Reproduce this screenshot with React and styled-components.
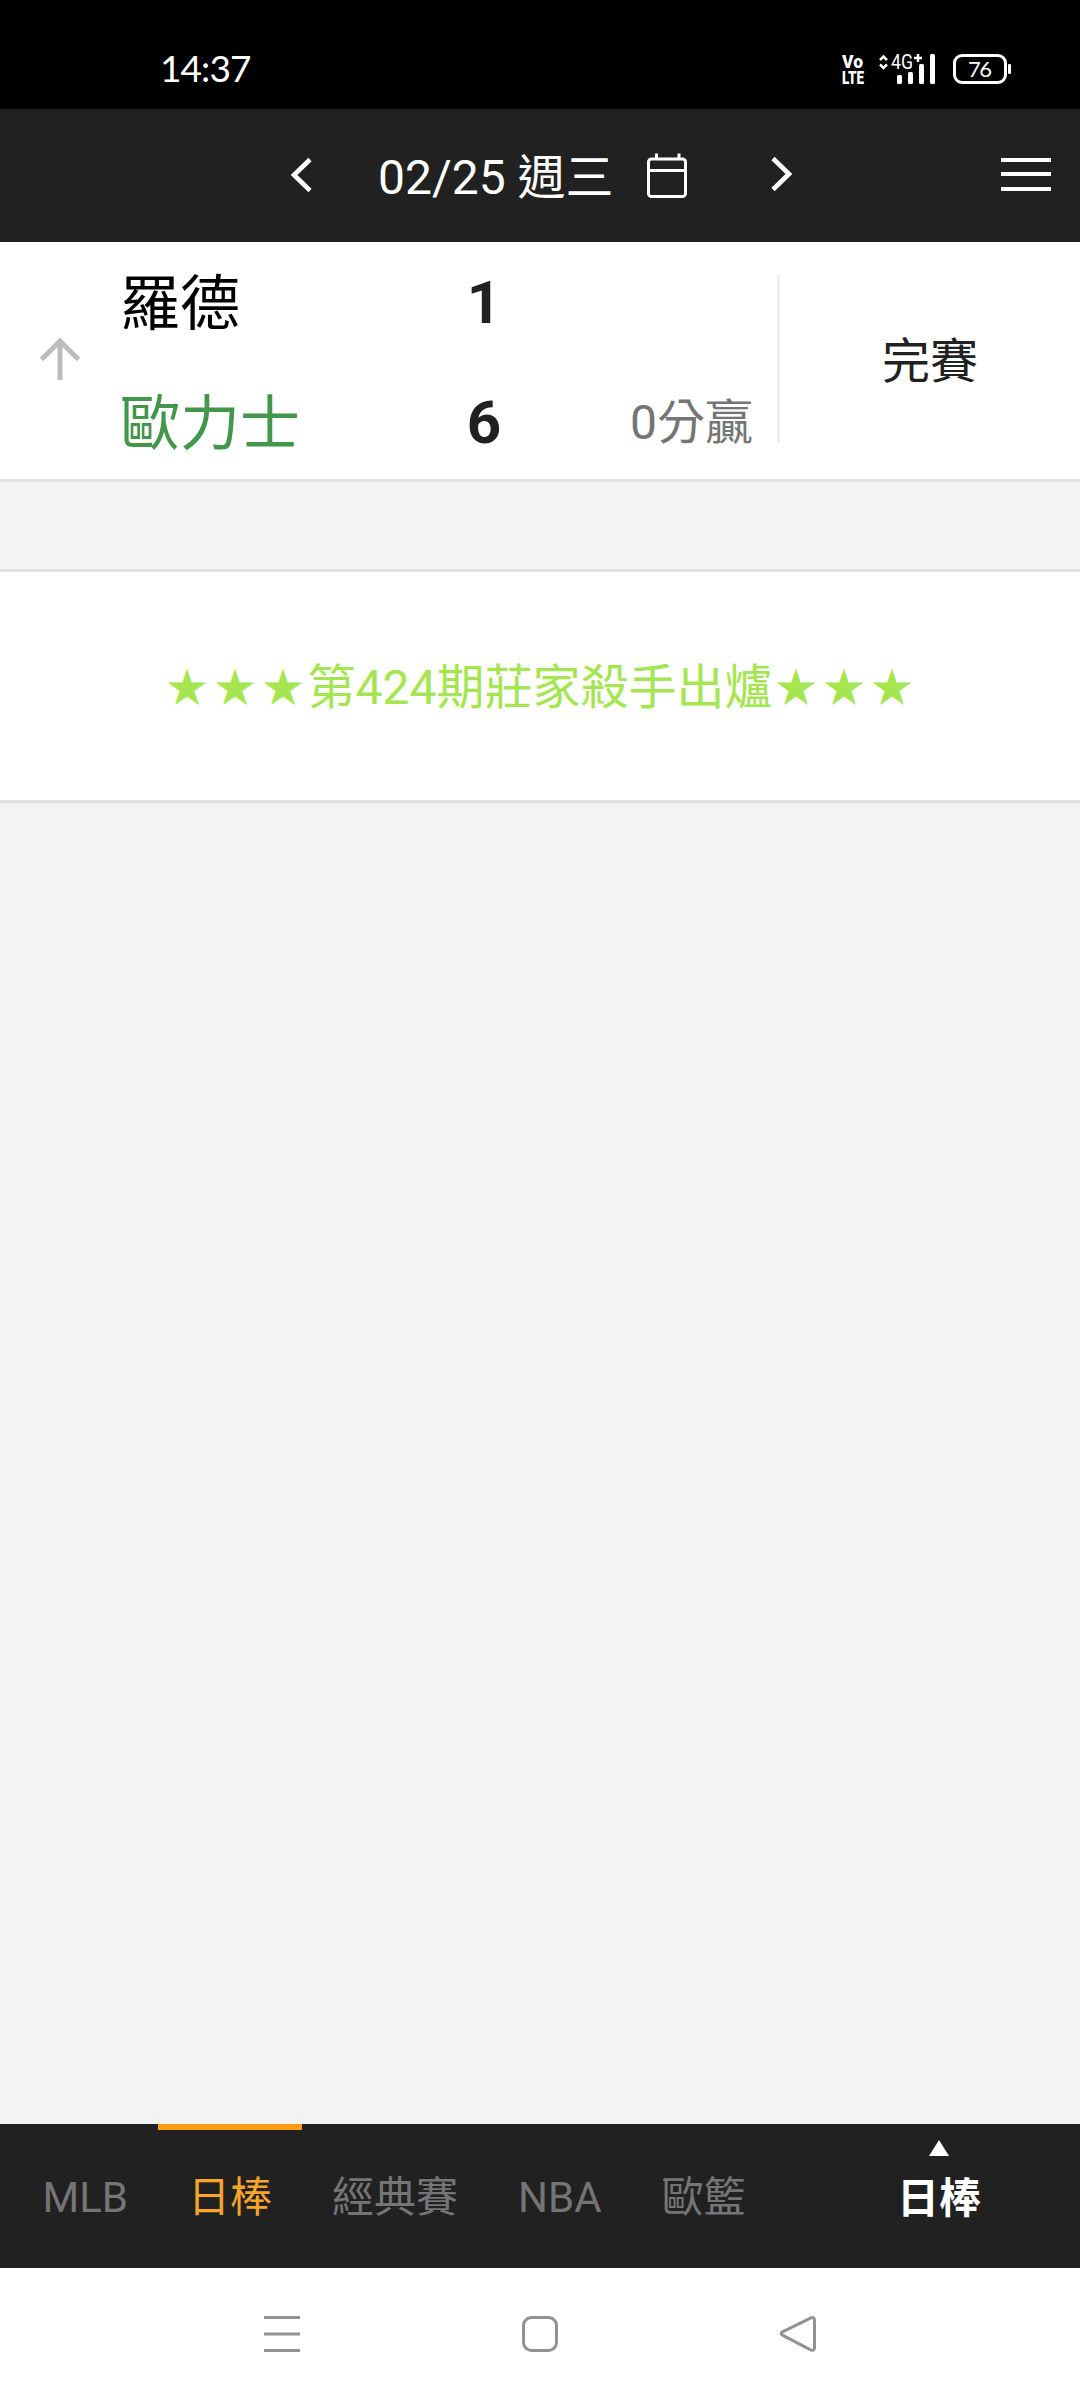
import React from "react";
import styled, { createGlobalStyle } from "styled-components";

const Global = createGlobalStyle`
  body {
    margin: 0;
    background: #f3f3f3;
    font-family: Roboto, "Noto Sans CJK TC", sans-serif;
  }
`;

const Screen = styled.div`
  display: flex;
  flex-direction: column;
  width: 1080px;
  height: 2400px;
  overflow: hidden;
  background: #f3f3f3;
`;

const StatusBar = styled.div`
  display: flex;
  justify-content: space-between;
  height: 109px;
  box-sizing: border-box;
  padding: 45px 69px 0 160px;
  background: #000;
`;

const Clock = styled.time`
  font-family: Lato, sans-serif;
  font-size: 37px;
  line-height: 46px;
  letter-spacing: -0.9px;
  color: #fff;
`;

const StatusIcons = styled.svg`
  width: 170px;
  height: 48px;
`;

const Header = styled.header`
  display: flex;
  align-items: center;
  height: 133px;
  box-sizing: border-box;
  padding: 0 29px 2px 287px;
  background: #212121;
`;

const IconButton = styled.button`
  display: flex;
  padding: 0;
  border: 0;
  background: none;
  margin-left: ${(p) => p.$gap || 0}px;
`;

const DateText = styled.span`
  width: 236px;
  margin-left: 61px;
  padding-top: 7px;
  font-size: 48px;
  line-height: 60px;
  white-space: pre;
  color: #fff;
`;

const GameRow = styled.section`
  display: flex;
  height: 237px;
  background: #fff;
  border-bottom: 3px solid #e0e0e0;
`;

const Trend = styled.div`
  display: flex;
  align-items: center;
  width: 120px;
  box-sizing: border-box;
  padding: 0 0 4px 36px;
`;

const Teams = styled.div`
  display: flex;
  flex-direction: column;
  width: 633px;
`;

const TeamLine = styled.div`
  display: flex;
  align-items: center;
  height: 120px;
  flex-shrink: 0;
  line-height: 80px;
`;

const TeamName = styled.span`
  width: 310px;
  padding-top: 5px;
  font-size: 60px;
  color: ${(p) => (p.$winner ? "#43974a" : "#000")};
`;

const Score = styled.span`
  width: 108px;
  padding-top: 1px;
  text-align: center;
  font-size: 60px;
  font-weight: 700;
  color: #212121;
`;

const Spread = styled.span`
  flex: 1;
  padding-top: 1px;
  text-align: right;
  font-size: 48px;
  color: #757575;
`;

const Divider = styled.div`
  width: 3px;
  height: 168px;
  margin: 33px 0 0 24px;
  background: #eee;
`;

const GameState = styled.div`
  display: flex;
  align-items: center;
  justify-content: center;
  flex: 1;
  padding-top: 3px;
  font-size: 48px;
  line-height: 60px;
  color: #212121;
`;

const Banner = styled.section`
  display: flex;
  align-items: center;
  justify-content: center;
  height: 225px;
  padding-top: 3px;
  margin-top: 87px;
  border: solid #e0e0e0;
  border-width: 3px 0;
  background: #fff;
  font-size: 48px;
  line-height: 60px;
  color: #a5e650;
`;

const Stars = styled.span`
  padding-left: 7px;
  margin: 0 -3px 8px -4px;
  font-family: "Noto Sans CJK TC", sans-serif;
  font-size: 41px;
  letter-spacing: 7px;
`;

const TabBar = styled.nav`
  display: flex;
  height: 144px;
  margin-top: auto;
  padding-left: 12.5px;
  background: #212121;
`;

const Tab = styled.div`
  display: flex;
  align-items: center;
  justify-content: center;
  box-sizing: border-box;
  height: 144px;
  padding: 0 30px 2px;
  border: solid ${(p) => (p.$active ? "#ff9c14" : "transparent")};
  border-width: 6px 0 0;
  font-size: 42px;
  line-height: 60px;
  color: ${(p) => (p.$active ? "#f9a52c" : "#757575")};
`;

const Current = styled.div`
  display: flex;
  flex-direction: column;
  align-items: center;
  width: 282px;
  box-sizing: border-box;
  padding-top: 16px;
  margin-left: auto;
  font-size: 42px;
  font-weight: 700;
  line-height: 60px;
  color: #fff;
`;

const UpMark = styled.span`
  width: 0;
  height: 0;
  margin-bottom: 13px;
  border: solid transparent;
  border-width: 0 10.5px 16px;
  border-bottom-color: #fff;
`;

const SystemNav = styled.footer`
  display: flex;
  justify-content: center;
  align-items: center;
  gap: 218px;
  height: 132px;
  background: #fff;
`;

function Chevron({ left }) {
  return (
    <svg width="30" height="40" viewBox="0 0 30 40" fill="none" stroke="#fff" strokeWidth="4.6">
      <path d={left ? "M23 4.5 7 20 23 35.500" : "M7 3.500 23 19 7 34.500"} />
    </svg>
  );
}

function SystemIcon({ children }) {
  return (
    <svg width="40" height="40" viewBox="0 0 40 40" fill="none" stroke="#929292" strokeWidth="3">
      {children}
    </svg>
  );
}

function SignalIcons() {
  return (
    <StatusIcons viewBox="841 45 170 48" fill="#fff">
      <g fontFamily="Roboto, sans-serif">
        <text fontSize="19" fontWeight="900">
          <tspan x="842" y="68" textLength="21" lengthAdjust="spacingAndGlyphs">Vo</tspan>
          <tspan x="842" y="84" textLength="22" lengthAdjust="spacingAndGlyphs">LTE</tspan>
        </text>
        <text x="891" y="69" fontSize="20" fontWeight="400" textLength="22" lengthAdjust="spacingAndGlyphs">4G</text>
        <text x="968" y="76.500" fontFamily="Lato, sans-serif" fontSize="22" textLength="24">76</text>
      </g>
      <path d="M914 58h8M918 54v8M880 60l3.500-3.500 3.500 3.500M880 64.500l3.500 3.500 3.500-3.500" stroke="#fff" strokeWidth="2.500" fill="none" />
      <rect x="897" y="75" width="5" height="9" rx="1.500" />
      <rect x="908" y="72" width="5" height="12" rx="1.500" />
      <rect x="919" y="64" width="5" height="20" rx="1.500" />
      <rect x="930" y="54" width="5" height="30" rx="1.500" />
      <rect x="954.500" y="55.500" width="51" height="27" rx="7.500" fill="none" stroke="#fff" strokeWidth="3" />
      <rect x="1008" y="64" width="3" height="10" rx="1" />
    </StatusIcons>
  );
}

const tabs = ["MLB", "日棒", "經典賽", "NBA", "歐籃"];

export default function App() {
  return (
    <>
      <Global />
      <Screen lang="zh-Hant">
        <StatusBar>
          <Clock>14:37</Clock>
          <SignalIcons />
        </StatusBar>
        <Header>
          <IconButton aria-label="prev"><Chevron left /></IconButton>
          <DateText>02/25 週三</DateText>
          <IconButton aria-label="calendar" $gap={31}>
            <svg width="44" height="46" viewBox="0 0 44 46" fill="none" stroke="#fff" strokeWidth="3">
              <rect x="3.500" y="7" width="37" height="37.500" rx="3" />
              <path d="M3 18.500h38M11.500 1.500v6M34 1.500v6" />
            </svg>
          </IconButton>
          <IconButton aria-label="next" $gap={77}><Chevron /></IconButton>
          <IconButton aria-label="menu" $gap={205}>
            <svg width="50" height="36" viewBox="0 0 50 36" stroke="#fff" strokeWidth="4">
              <path d="M0 3h50M0 17h50M0 32h50" />
            </svg>
          </IconButton>
        </Header>
        <GameRow>
          <Trend>
            <svg width="48" height="48" viewBox="0 0 48 48" fill="none" stroke="#bdbdbd" strokeWidth="5">
              <path d="M24 45V6M5.500 24.500 24 6l18.500 18.500" />
            </svg>
          </Trend>
          <Teams>
            <TeamLine>
              <TeamName>羅德</TeamName>
              <Score>1</Score>
            </TeamLine>
            <TeamLine>
              <TeamName $winner>歐力士</TeamName>
              <Score>6</Score>
              <Spread>0分贏</Spread>
            </TeamLine>
          </Teams>
          <Divider />
          <GameState>完賽</GameState>
        </GameRow>
        <Banner>
          <Stars>★★★</Stars>第424期莊家殺手出爐<Stars>★★★</Stars>
        </Banner>
        <TabBar>
          {tabs.map((t) => (
            <Tab key={t} $active={t === "日棒"}>{t}</Tab>
          ))}
          <Current>
            <UpMark />
            日棒
          </Current>
        </TabBar>
        <SystemNav>
          <SystemIcon><path d="M2 3.500h36M2 20h36M2 36.500h36" /></SystemIcon>
          <SystemIcon><rect x="3.500" y="3.500" width="33" height="33" rx="8" /></SystemIcon>
          <SystemIcon><path d="M33 3.800 4.500 17.800q-2.500 1.700 0 3.400L33 36q3.500 1 3.500-2V6q0-3.500-3.500-2.200z" /></SystemIcon>
        </SystemNav>
      </Screen>
    </>
  );
}
